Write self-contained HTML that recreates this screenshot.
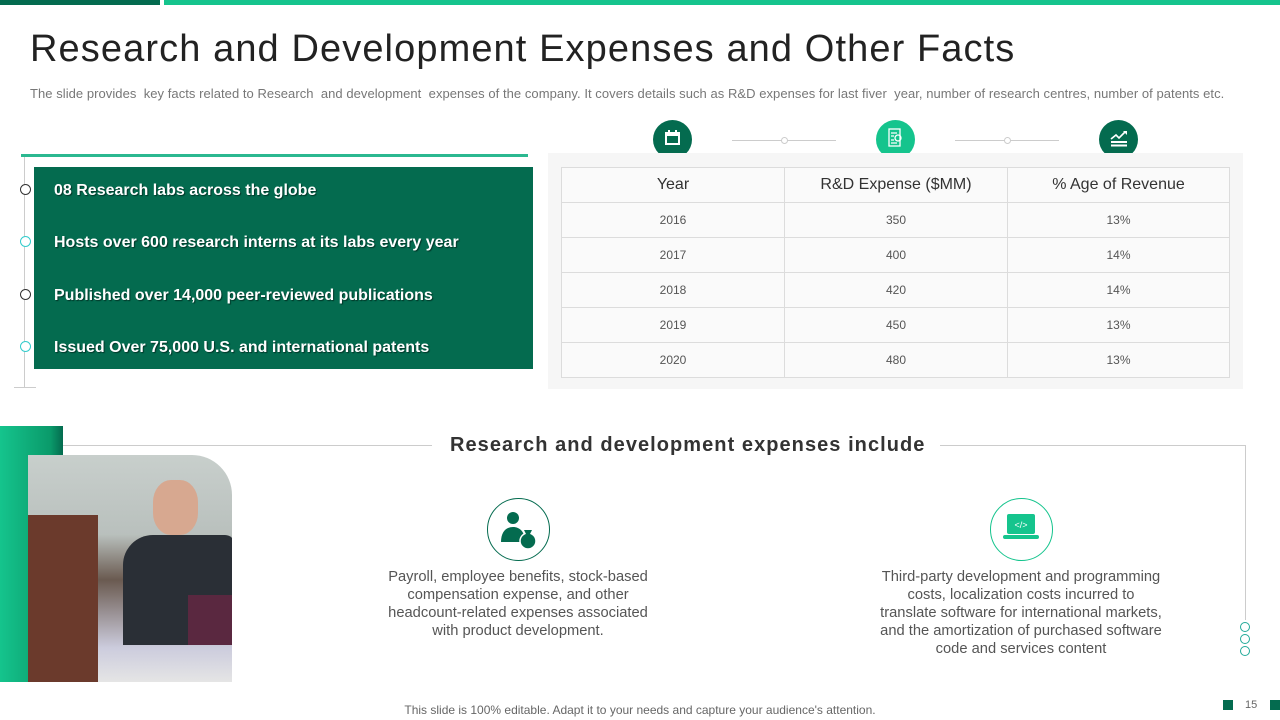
<!DOCTYPE html>
<html><head><meta charset="utf-8"><style>
*{margin:0;padding:0;box-sizing:border-box}
body{width:1280px;height:720px;position:relative;overflow:hidden;background:#fff;font-family:"Liberation Sans",sans-serif;color:#333}
.a{position:absolute}
table{border-collapse:collapse}
td,th{border:1px solid #dcdcdc;text-align:center;font-size:12px;color:#555;font-weight:normal;height:35px}
th{font-size:16px;color:#333}
.it{position:absolute;left:54px;color:#fff;font-weight:bold;font-size:16px;text-shadow:1px 1px 1px rgba(0,0,0,.5)}
.dot{position:absolute;left:20px;width:11px;height:11px;border-radius:50%;background:#fff;border:1px solid}
.c{position:absolute;border-radius:50%}
.p{position:absolute;font-size:14.7px;color:#555;text-align:center;line-height:18px}
</style></head><body>
<div class="a" style="left:0;top:0;width:160px;height:5px;background:#046b4f"></div>
<div class="a" style="left:164px;top:0;width:1116px;height:5px;background:#15c48d"></div>
<div class="a" style="left:30px;top:28px;font-size:38px;color:#222;letter-spacing:1.1px;white-space:nowrap">Research and Development Expenses and Other Facts</div>
<div class="a" style="left:30px;top:86px;font-size:13px;color:#777;white-space:nowrap;letter-spacing:0.05px">The slide provides &nbsp;key facts related to Research &nbsp;and development &nbsp;expenses of the company. It covers details such as R&amp;D expenses for last fiver &nbsp;year, number of research centres, number of patents etc.</div>

<div class="a" style="left:21px;top:154px;width:507px;height:3px;background:#2bb890"></div>
<div class="a" style="left:24px;top:157px;width:1px;height:230px;background:#ccc"></div>
<div class="a" style="left:14px;top:387px;width:22px;height:1px;background:#ccc"></div>
<div class="a" style="left:34px;top:167px;width:499px;height:202px;background:#046b4f"></div>
<div class="it" style="top:182px">08 Research labs across the globe</div>
<div class="it" style="top:234px">Hosts over 600 research interns at its labs every year</div>
<div class="it" style="top:287px">Published over 14,000 peer-reviewed publications</div>
<div class="it" style="top:339px">Issued Over 75,000 U.S. and international patents</div>
<div class="dot" style="top:184px;border-color:#333"></div>
<div class="dot" style="top:236px;border-color:#3cc"></div>
<div class="dot" style="top:289px;border-color:#333"></div>
<div class="dot" style="top:341px;border-color:#3cc"></div>

<div class="a" style="left:732px;top:140px;width:104px;height:1px;background:#ccc"></div>
<div class="a" style="left:955px;top:140px;width:104px;height:1px;background:#ccc"></div>
<div class="c" style="left:781px;top:137px;width:7px;height:7px;border:1px solid #ccc;background:#fff"></div>
<div class="c" style="left:1004px;top:137px;width:7px;height:7px;border:1px solid #ccc;background:#fff"></div>
<div class="c" style="left:653px;top:120px;width:39px;height:39px;background:#046b4f"></div>
<div class="c" style="left:876px;top:120px;width:39px;height:39px;background:#15c48d"></div>
<div class="c" style="left:1099px;top:120px;width:39px;height:39px;background:#046b4f"></div>
<svg class="a" style="left:664px;top:129px" width="17" height="17" viewBox="0 0 17 17"><rect x="1" y="3" width="15" height="13" fill="#fff"/><rect x="3" y="7" width="11" height="7" fill="#046b4f"/><rect x="4" y="1" width="2" height="4" fill="#fff"/><rect x="11" y="1" width="2" height="4" fill="#fff"/></svg>
<svg class="a" style="left:886px;top:128px" width="19" height="20" viewBox="0 0 19 20" fill="none" stroke="#fff" stroke-width="1.3"><rect x="3" y="1" width="11" height="17"/><circle cx="12" cy="10" r="3"/><path d="M5 5h6M5 8h3M5 12h3M5 15h6"/></svg>
<svg class="a" style="left:1109px;top:128px" width="20" height="20" viewBox="0 0 20 20" fill="#fff"><path d="M2 11l5-4 3 3 6-6" stroke="#fff" stroke-width="1.6" fill="none"/><path d="M14 3h4v4z"/><rect x="2" y="13" width="16" height="2"/><rect x="2" y="16.5" width="16" height="2"/></svg>

<div class="a" style="left:548px;top:153px;width:695px;height:236px;background:#f6f6f6"></div>
<table class="a" style="left:561px;top:167px;width:669px;background:#fafafa">
<tr><th style="width:223px">Year</th><th style="width:223px">R&amp;D Expense ($MM)</th><th>% Age of Revenue</th></tr>
<tr><td>2016</td><td>350</td><td>13%</td></tr>
<tr><td>2017</td><td>400</td><td>14%</td></tr>
<tr><td>2018</td><td>420</td><td>14%</td></tr>
<tr><td>2019</td><td>450</td><td>13%</td></tr>
<tr><td>2020</td><td>480</td><td>13%</td></tr>
</table>

<div class="a" style="left:0;top:426px;width:63px;height:256px;background:linear-gradient(90deg,#15c48d,#0a9a6a 80%,#046b4f)"></div>
<div class="a" style="left:28px;top:455px;width:204px;height:227px;border-top-right-radius:40px;overflow:hidden;background:linear-gradient(180deg,#c8cfcc 0%,#b9c0bd 35%,#6a5a50 55%,#ccd 85%,#e5e5e5 100%)">
<div class="a" style="left:0;top:60px;width:70px;height:167px;background:#6b3a2c"></div>
<div class="a" style="left:95px;top:80px;width:112px;height:110px;background:#2a2f36;border-radius:30px 10px 0 0"></div>
<div class="a" style="left:125px;top:25px;width:45px;height:55px;background:#d7a890;border-radius:40%"></div>
<div class="a" style="left:160px;top:140px;width:47px;height:50px;background:#5a2840"></div>
</div>
<div class="a" style="left:63px;top:445px;width:369px;height:1px;background:#ccc"></div>
<div class="a" style="left:940px;top:445px;width:305px;height:1px;background:#ccc"></div>
<div class="a" style="left:1245px;top:445px;width:1px;height:175px;background:#ccc"></div>
<div class="a" style="left:450px;top:434px;font-size:20px;font-weight:bold;color:#333;letter-spacing:1.05px">Research and development expenses include</div>
<div class="c" style="left:1240px;top:622px;width:10px;height:10px;border:1px solid #2a9"></div>
<div class="c" style="left:1240px;top:634px;width:10px;height:10px;border:1px solid #2a9"></div>
<div class="c" style="left:1240px;top:646px;width:10px;height:10px;border:1px solid #2a9"></div>

<div class="c" style="left:487px;top:498px;width:63px;height:63px;border:1px solid #046b4f"></div>
<svg class="a" style="left:500px;top:510px" width="38" height="40" viewBox="0 0 38 40" fill="#046b4f"><circle cx="13" cy="8" r="6"/><path d="M1 32c0-10 5-15 12-15s12 5 12 15z"/><circle cx="28" cy="31" r="8" stroke="#fff" stroke-width="1.5"/><path d="M24 20h8l-2 4h-4z"/></svg>
<div class="c" style="left:990px;top:498px;width:63px;height:63px;border:1px solid #15c48d"></div>
<svg class="a" style="left:1002px;top:512px" width="38" height="30" viewBox="0 0 38 30"><rect x="5" y="2" width="28" height="20" rx="2" fill="#15c48d"/><rect x="1" y="23" width="36" height="4" rx="2" fill="#15c48d"/><text x="19" y="16" font-size="9" fill="#fff" text-anchor="middle" font-family="Liberation Sans">&lt;/&gt;</text></svg>

<div class="p" style="left:383px;top:568px;width:270px">Payroll, employee benefits, stock-based compensation expense, and other headcount-related expenses associated with product development.</div>
<div class="p" style="left:874px;top:568px;width:294px">Third-party development and programming costs, localization costs incurred to<br>translate software for international markets,<br>and the amortization of purchased software<br>code and services content</div>

<div class="a" style="left:0;top:703px;width:1280px;text-align:center;font-size:12px;color:#666">This slide is 100% editable. Adapt it to your needs and capture your audience's attention.</div>
<div class="a" style="left:1223px;top:700px;width:10px;height:10px;background:#046b4f"></div>
<div class="a" style="left:1245px;top:699px;font-size:11px;color:#666">15</div>
<div class="a" style="left:1270px;top:700px;width:10px;height:10px;background:#046b4f"></div>
</body></html>
